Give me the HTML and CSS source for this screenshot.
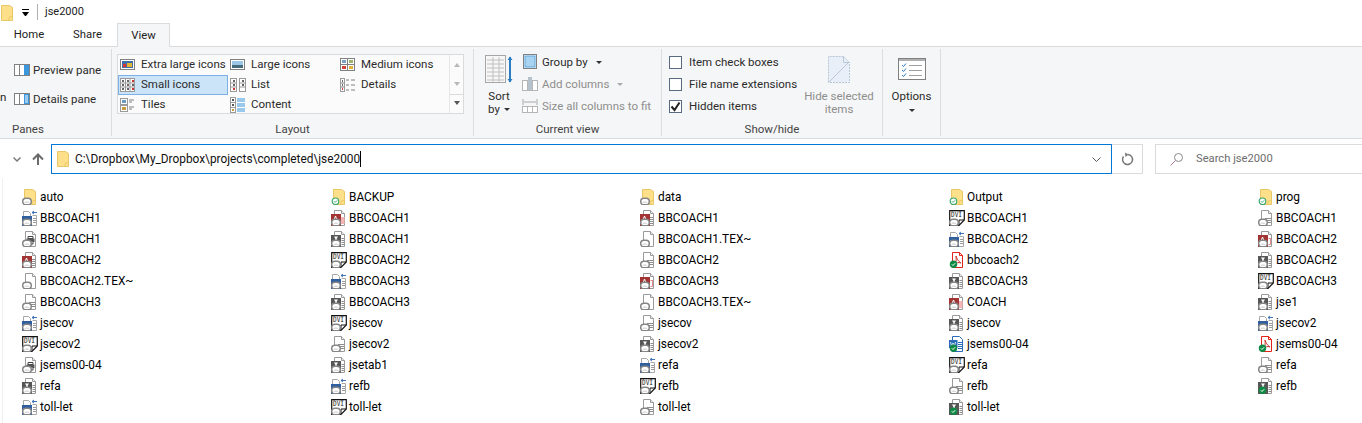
FILE: index.html
```html
<!DOCTYPE html>
<html lang="en">
<head>
<meta charset="utf-8">
<title>jse2000</title>
<link rel="stylesheet" href="styles.css">
</head>
<body>
<svg class="defs" width="0" height="0">
  <symbol id="folder" viewBox="0 0 16 16"><path d="M2.500 .5h8l3 2v13h-11z" fill="#ffe08a" stroke="#e8c766"/><path d="M10 15.500v-3l3.500-1.500" fill="none" stroke="#e8c766"/></symbol>
  <symbol id="off" viewBox="0 0 16 16"><rect x=".7" y="9.200" width="8.600" height="6.600" rx="3.300" fill="#fff" stroke="#858585" stroke-width="1.500"/><path d="M2.500 14c0-.8.500-1.200 1-1.200.3-.9 2.400-.9 2.700 0 .7 0 1.100.4 1.100 1.200z" fill="#dcdcdc"/></symbol>
  <symbol id="ok" viewBox="0 0 16 16"><circle cx="4.500" cy="12.300" r="3.300" fill="#fff" stroke="#3aa76d" stroke-width="1.200"/><path d="M3 12.300l1.100 1.100 2-2" fill="none" stroke="#3aa76d"/></symbol>
  <symbol id="sync" viewBox="0 0 16 16"><circle cx="4.500" cy="12.300" r="3.700" fill="#0f8a45"/><path d="M2.800 12.300l1.200 1.200 2.200-2.300" fill="none" stroke="#fff"/></symbol>
  <symbol id="page" viewBox="0 0 16 16"><path d="M3.500 .5h7l3 3v12h-10z" fill="#fff" stroke="#9a9a9a"/><path d="M10.500 .5v3h3" fill="#eee" stroke="#9a9a9a"/></symbol>
  <symbol id="lines" viewBox="0 0 16 16"><use href="#page"/><path d="M7 8.500h6M7 10.500h6M7 12.500h6" stroke="#8c8c8c"/></symbol>
  <symbol id="print" viewBox="0 0 16 16"><use href="#page"/><path d="M6 5.500h5v2h-5z" fill="#fff" stroke="#444"/><path d="M4.500 7.500h8v3.500h-8z" fill="#555"/><path d="M6 10h5v3h-5z" fill="#fff" stroke="#444"/></symbol>
  <symbol id="bib" viewBox="0 0 16 16"><path d="M1.500 1.500h5l2 2v3h-7z" fill="#fff" stroke="#a8a8a8"/><path d="M10 2.500h5M10 2.500l2-1.500M10 2.500l2 1.500" fill="none" stroke="#3f74b8"/><path d="M10.500 5.500h4v10h-5" fill="#fff" stroke="#a8a8a8"/><path d="M11 8.500h3M11 10.500h3M11 12.500h3" stroke="#9a9a9a"/><rect x="0" y="6" width="10" height="10" fill="#2f5f9f"/></symbol>
  <symbol id="red" viewBox="0 0 16 16"><use href="#page"/><path d="M10 7.500h3M10 9.500h3M10 11.500h3M10 13.500h3" stroke="#8c8c8c"/><rect x="0" y="4" width="10" height="12" fill="#a23434"/><path d="M3 10l1.500-4 1.500 4" fill="none" stroke="#fff"/></symbol>
  <symbol id="redlight" viewBox="0 0 16 16"><use href="#page"/><path d="M10.500 7.500h2.500M12.500 7.500v6h-2" fill="none" stroke="#e58a8a"/><rect x="0" y="4" width="10" height="12" fill="#a23434"/><path d="M3 10l1.500-4 1.500 4" fill="none" stroke="#fff"/></symbol>
  <symbol id="coach" viewBox="0 0 16 16"><use href="#page"/><rect x="10" y="7" width="3.500" height="7" fill="#f5b5b5"/><rect x="0" y="4" width="10" height="12" fill="#a23434"/><path d="M3 10l1.500-4 1.500 4" fill="none" stroke="#fff"/></symbol>
  <symbol id="dark" viewBox="0 0 16 16"><use href="#page"/><path d="M10.500 7.500h2.500M10.500 9.500h2.500M10.500 11.500h2.500M10.500 13.500h2.500" stroke="#8c8c8c"/><rect x="0" y="4" width="10" height="12" fill="#565656"/><path d="M3 5.500h4l-1.500 2.500 1.500 2.500h-4l1.500-2.500z" fill="#fff"/></symbol>
  <symbol id="dvi" viewBox="0 0 16 16"><path d="M.7.700h14.600v9.300l-5.300 5.300h-9.300z" fill="#fff" stroke="#111" stroke-width="1.200"/><path d="M15 10h-5v5" fill="none" stroke="#111"/></symbol>
  <symbol id="pdf" viewBox="0 0 16 16"><path d="M3.500 .5h7l3 3v12h-10z" fill="#fff" stroke="#e2231a"/><path d="M10.500 .5v3h3" fill="none" stroke="#e2231a"/><path d="M7 4c1 3 2 5 5 7-3-1-4-.5-6 2 1-3 1.500-5 1-9z" fill="none" stroke="#c9342c"/></symbol>
  <symbol id="word" viewBox="0 0 16 16"><path d="M3.500 .5h7l3 3v12h-10z" fill="#fff" stroke="#2b6cb8"/><path d="M9 6.500h4M9 8.500h4M9 10.500h4M9 12.500h4" stroke="#2b6cb8"/><rect x="0" y="4" width="8.500" height="8" fill="#2b6cb8"/><path d="M1.500 6l1 4 1.500-3 1.500 3 1-4" fill="none" stroke="#fff" stroke-width=".8"/></symbol>
</svg>

<header class="titlebar">
  <svg class="ico title-folder"><use href="#folder"/></svg>
  <span class="qat-caret"></span>
  <span class="title-sep"></span>
  <span>jse2000</span>
</header>

<nav class="tabs">
  <span class="tab">Home</span>
  <span class="tab tab-share">Share</span>
  <span class="tab tab-active">View</span>
</nav>

<section class="ribbon">
  <div class="group g-panes">
    <div class="group-body panes">
      <span class="clipped">n</span>
      <div class="pane-list">
        <div class="pane-btn"><svg class="ico" viewBox="0 0 16 16"><rect x=".5" y="2.500" width="15" height="11" fill="#fff" stroke="#808080"/><path d="M5.500 3v10" stroke="#808080"/><rect x="10" y="3" width="5" height="10" fill="#3a96dd"/></svg>Preview pane</div>
        <div class="pane-btn"><svg class="ico" viewBox="0 0 16 16"><rect x=".5" y="2.500" width="15" height="11" fill="#fff" stroke="#808080"/><path d="M5.500 3v10" stroke="#808080"/><rect x="10" y="3" width="5" height="10" fill="#3a96dd"/><path d="M11 5h3M11 7h3M11 9h3M11 11h3" stroke="#fff"/></svg>Details pane</div>
      </div>
    </div>
    <div class="group-label label-left">Panes</div>
  </div>

  <div class="group g-layout">
    <div class="group-body">
      <div class="gallery">
        <div class="gallery-grid">
          <div class="gal"><svg class="ico" viewBox="0 0 16 16"><rect x=".5" y="2.500" width="14" height="10" fill="#fff" stroke="#808080"/><rect x="2" y="4" width="11" height="7" fill="#3d6ea8"/><rect x="3" y="7" width="3" height="3" fill="#d33"/><rect x="7" y="6" width="5" height="4" fill="#e8b530"/></svg><span class="gal-text">Extra large icons</span></div>
          <div class="gal"><svg class="ico" viewBox="0 0 16 16"><rect x=".5" y="2.500" width="14" height="10" fill="#fff" stroke="#808080"/><rect x="2" y="4" width="11" height="4" fill="#9cc6e6"/><rect x="2" y="8" width="11" height="3" fill="#456a7a"/></svg><span class="gal-text">Large icons</span></div>
          <div class="gal"><svg class="ico" viewBox="0 0 16 16"><rect x=".5" y="1.500" width="14" height="12" fill="#fff" stroke="#808080"/><path d="M7.500 2v11M1 7.500h13" stroke="#808080"/><rect x="2" y="3" width="4" height="3" fill="#7aa2c8"/><rect x="9" y="3" width="4" height="3" fill="#9db56a"/><rect x="2" y="9" width="4" height="3" fill="#d0433a"/><rect x="9" y="9" width="4" height="3" fill="#e3b23c"/></svg><span class="gal-text">Medium icons</span></div>
          <div class="gal gal-on"><svg class="ico" viewBox="0 0 16 16"><rect x=".5" y="1.500" width="14" height="13" fill="#fff" stroke="#9a9a9a"/><path d="M5.500 2v12M10 2v12M1 6h13M1 10h13" stroke="#9a9a9a"/><path d="M2 3h2v2h-2zM7 3h2v2h-2zM2 7h2v2h-2zM7 7h2v2h-2zM12 7h2v2h-2zM2 11h2v2h-2zM7 11h2v2h-2z" fill="#666"/><path d="M12 3h2v2h-2zM12 11h2v2h-2z" fill="#c33"/></svg><span class="gal-text">Small icons</span></div>
          <div class="gal"><svg class="ico" viewBox="0 0 16 16"><rect x=".5" y="1.500" width="6" height="13" fill="#fff" stroke="#9a9a9a"/><rect x="9.500" y="1.500" width="6" height="13" fill="#fff" stroke="#9a9a9a"/><path d="M1 6h5M1 10h5M10 6h5M10 10h5" stroke="#9a9a9a"/><path d="M3 3h2v2h-2zM3 7h2v2h-2zM12 3h2v2h-2zM12 7h2v2h-2z" fill="#666"/><path d="M3 11h2v2h-2z" fill="#c33"/></svg><span class="gal-text">List</span></div>
          <div class="gal"><svg class="ico" viewBox="0 0 16 16"><rect x=".5" y="1.500" width="4" height="13" fill="#fff" stroke="#9a9a9a"/><path d="M1 6h3M1 10h3M6 3h3M11 3h4M6 8h3M11 8h4M6 13h3M11 13h4" stroke="#808080"/><path d="M2 3h1v2h-1zM2 7h1v2h-1z" fill="#666"/><path d="M2 11h1v2h-1z" fill="#c33"/></svg><span class="gal-text">Details</span></div>
          <div class="gal"><svg class="ico" viewBox="0 0 16 16"><rect x=".5" y="1.500" width="7" height="6" fill="#fff" stroke="#9a9a9a"/><rect x=".5" y="8.500" width="7" height="6" fill="#fff" stroke="#9a9a9a"/><rect x="2" y="3" width="4" height="3" fill="#6a9ac0"/><rect x="2" y="10" width="4" height="3" fill="#c99a3a"/><path d="M9 3h5M9 5h3M9 10h5M9 12h3" stroke="#808080"/></svg><span class="gal-text">Tiles</span></div>
          <div class="gal"><svg class="ico" viewBox="0 0 16 16"><rect x=".5" y=".5" width="5" height="15" fill="#fff" stroke="#9a9a9a"/><path d="M1 5.500h4M1 10.500h4" stroke="#9a9a9a"/><path d="M7 2h8M7 4h8M7 7h8M7 9h8M7 12h8M7 14h8" stroke="#3a96dd"/><path d="M2 2h2v2h-2zM2 7h2v2h-2z" fill="#555"/><path d="M2 12h2v2h-2z" fill="#c99a3a"/></svg><span class="gal-text">Content</span></div>
        </div>
        <div class="gallery-scroll">
          <span class="arrow-up"></span>
          <span class="arrow-down"></span>
          <span class="arrow-more"></span>
        </div>
      </div>
    </div>
    <div class="group-label">Layout</div>
  </div>

  <div class="group g-current">
    <div class="group-body current">
      <div class="big-btn sort-btn">
        <svg class="big-ico" width="28" height="30" viewBox="0 0 28 30"><rect x=".5" y=".5" width="20" height="27" fill="#f7f7f7" stroke="#a6a6a6"/><path d="M2 5h17M2 9h17M2 13h17M2 17h17M2 21h17M2 25h17M8 2v25M14 2v25" stroke="#c0c0c0"/><path d="M25 2v25" stroke="#2b7cc4" stroke-width="2"/><path d="M22.500 5l2.500-3.500 2.500 3.500zM22.500 24l2.500 3.500 2.500-3.500z" fill="#2b7cc4"/></svg>
        <span>Sort</span>
        <span>by<i class="caret"></i></span>
      </div>
      <div class="stack">
        <div class="cmd"><svg class="ico" viewBox="0 0 16 16"><rect x="1.500" y=".5" width="13" height="14" fill="none" stroke="#808080"/><rect x="3" y="2" width="10" height="11" fill="#a8d4f2" stroke="#5fa8de"/></svg>Group by<i class="caret"></i></div>
        <div class="cmd off"><svg class="ico" viewBox="0 0 16 16"><rect x=".5" y="4.500" width="15" height="10" fill="#fff" stroke="#b5b5b5"/><path d="M5.500 5v9M10.500 5v9" stroke="#b5b5b5"/><rect x="6" y="1" width="4" height="13" fill="#b5c2cc"/></svg>Add columns<i class="caret caret-off"></i></div>
        <div class="cmd off"><svg class="ico" viewBox="0 0 16 16"><path d="M1 1v6M15 1v6M2 4h12" stroke="#a8a8a8" fill="none"/><rect x=".5" y="8.500" width="15" height="6" fill="#fff" stroke="#b5b5b5"/><path d="M5.500 9v5M10.500 9v5" stroke="#b5b5b5"/></svg>Size all columns to fit</div>
      </div>
    </div>
    <div class="group-label">Current view</div>
  </div>

  <div class="group g-show">
    <div class="group-body show">
      <div class="checks">
        <label class="check"><span class="box"></span>Item check boxes</label>
        <label class="check"><span class="box"></span>File name extensions</label>
        <label class="check"><span class="box"><svg width="13" height="13" viewBox="0 0 13 13"><path d="M2.500 6.500l3 3.500 5-7.500" fill="none" stroke="#222" stroke-width="2"/></svg></span>Hidden items</label>
      </div>
      <div class="big-btn hide-btn">
        <svg class="big-ico" width="24" height="30" viewBox="0 0 24 30"><path d="M1.500 1.500h15l6 6v20h-21z" fill="#e9eff8"/><path d="M1.500 27.500v-26h15l6 6v20z" fill="none" stroke="#b9c6d6" stroke-dasharray="2 1"/><path d="M16.500 1.500v6h6M2 27l20-20" fill="none" stroke="#b9c6d6"/></svg>
        <span>Hide selected</span>
        <span>items</span>
      </div>
    </div>
    <div class="group-label">Show/hide</div>
  </div>

  <div class="group g-options">
    <div class="group-body">
      <div class="big-btn options-btn">
        <svg class="big-ico" width="28" height="30" viewBox="0 0 28 30"><rect x=".5" y="3.500" width="27" height="21" fill="#fff" stroke="#808080"/><rect x="1" y="4" width="26" height="2" fill="#b0b0b0"/><path d="M4 10l1.500 1.500 2.500-3M4 15l1.500 1.500 2.500-3M4 20l1.500 1.500 2.500-3" fill="none" stroke="#2b7cc4"/><path d="M11 10.500h13M11 15.500h13M11 20.500h13" stroke="#a0a0a0"/></svg>
        <span>Options</span>
        <i class="caret"></i>
      </div>
    </div>
  </div>
</section>

<section class="addressrow">
  <svg class="nav-chev" width="8" height="5" viewBox="0 0 8 5"><path d="M.5.500l3.500 3.500 3.500-3.500" fill="none" stroke="#7a7a7a" stroke-width="1.500"/></svg>
  <svg class="nav-up" width="12" height="12" viewBox="0 0 12 12"><path d="M6 12V1.500M1 6.500l5-5 5 5" fill="none" stroke="#6a6a6a" stroke-width="2"/></svg>
  <div class="address">
    <svg class="ico addr-folder"><use href="#folder"/></svg>
    <span class="addr-text">C:\Dropbox\My_Dropbox\projects\completed\jse2000</span>
    <svg class="addr-chev" width="9" height="5" viewBox="0 0 9 5"><path d="M.5.500l4 4 4-4" fill="none" stroke="#555"/></svg>
  </div>
  <div class="refresh"><svg width="14" height="14" viewBox="0 0 14 14"><path d="M8 2.500a5 5 0 1 1-4.500 2" fill="none" stroke="#777" stroke-width="1.500"/><path d="M5 .5l3.500 2-3 2.500z" fill="#777"/></svg></div>
  <div class="search"><svg width="14" height="14" viewBox="0 0 14 14"><circle cx="8.500" cy="5.500" r="4" fill="none" stroke="#8a8a8a"/><path d="M5.500 8.500l-5 5" stroke="#b07aa8"/></svg><span>Search jse2000</span></div>
</section>

<main class="files">
  <div class="file"><svg class="ico"><use href="#folder"/><use href="#off"/></svg>auto</div>
  <div class="file"><svg class="ico"><use href="#folder"/><use href="#ok"/></svg>BACKUP</div>
  <div class="file"><svg class="ico"><use href="#folder"/><use href="#off"/></svg>data</div>
  <div class="file"><svg class="ico"><use href="#folder"/><use href="#ok"/></svg>Output</div>
  <div class="file"><svg class="ico"><use href="#folder"/><use href="#ok"/></svg>prog</div>

  <div class="file"><svg class="ico"><use href="#bib"/><use href="#off"/></svg>BBCOACH1</div>
  <div class="file"><svg class="ico"><use href="#coach"/><use href="#off"/></svg>BBCOACH1</div>
  <div class="file"><svg class="ico"><use href="#red"/><use href="#off"/></svg>BBCOACH1</div>
  <div class="file"><svg class="ico"><use href="#dvi"/><text class="dvi-text" x="2" y="7" textLength="11" lengthAdjust="spacingAndGlyphs">DVI</text><use href="#off"/></svg>BBCOACH1</div>
  <div class="file"><svg class="ico"><use href="#lines"/><use href="#off"/></svg>BBCOACH1</div>

  <div class="file"><svg class="ico"><use href="#print"/><use href="#off"/></svg>BBCOACH1</div>
  <div class="file"><svg class="ico"><use href="#dark"/><use href="#off"/></svg>BBCOACH1</div>
  <div class="file"><svg class="ico"><use href="#page"/><use href="#off"/></svg>BBCOACH1.TEX~</div>
  <div class="file"><svg class="ico"><use href="#bib"/><use href="#off"/></svg>BBCOACH2</div>
  <div class="file"><svg class="ico"><use href="#redlight"/><use href="#off"/></svg>BBCOACH2</div>

  <div class="file"><svg class="ico"><use href="#red"/><use href="#off"/></svg>BBCOACH2</div>
  <div class="file"><svg class="ico"><use href="#dvi"/><text class="dvi-text" x="2" y="7" textLength="11" lengthAdjust="spacingAndGlyphs">DVI</text><use href="#off"/></svg>BBCOACH2</div>
  <div class="file"><svg class="ico"><use href="#lines"/><use href="#off"/></svg>BBCOACH2</div>
  <div class="file"><svg class="ico"><use href="#pdf"/><use href="#sync"/></svg>bbcoach2</div>
  <div class="file"><svg class="ico"><use href="#dark"/><use href="#off"/></svg>BBCOACH2</div>

  <div class="file"><svg class="ico"><use href="#page"/><use href="#off"/></svg>BBCOACH2.TEX~</div>
  <div class="file"><svg class="ico"><use href="#bib"/><use href="#off"/></svg>BBCOACH3</div>
  <div class="file"><svg class="ico"><use href="#redlight"/><use href="#off"/></svg>BBCOACH3</div>
  <div class="file"><svg class="ico"><use href="#dark"/><use href="#off"/></svg>BBCOACH3</div>
  <div class="file"><svg class="ico"><use href="#dvi"/><text class="dvi-text" x="2" y="7" textLength="11" lengthAdjust="spacingAndGlyphs">DVI</text><use href="#off"/></svg>BBCOACH3</div>

  <div class="file"><svg class="ico"><use href="#lines"/><use href="#off"/></svg>BBCOACH3</div>
  <div class="file"><svg class="ico"><use href="#dark"/><use href="#off"/></svg>BBCOACH3</div>
  <div class="file"><svg class="ico"><use href="#page"/><use href="#off"/></svg>BBCOACH3.TEX~</div>
  <div class="file"><svg class="ico"><use href="#coach"/><use href="#off"/></svg>COACH</div>
  <div class="file"><svg class="ico"><use href="#dark"/><use href="#off"/></svg>jse1</div>

  <div class="file"><svg class="ico"><use href="#bib"/><use href="#off"/></svg>jsecov</div>
  <div class="file"><svg class="ico"><use href="#dvi"/><text class="dvi-text" x="2" y="7" textLength="11" lengthAdjust="spacingAndGlyphs">DVI</text><use href="#off"/></svg>jsecov</div>
  <div class="file"><svg class="ico"><use href="#lines"/><use href="#off"/></svg>jsecov</div>
  <div class="file"><svg class="ico"><use href="#dark"/><use href="#off"/></svg>jsecov</div>
  <div class="file"><svg class="ico"><use href="#bib"/><use href="#off"/></svg>jsecov2</div>

  <div class="file"><svg class="ico"><use href="#dvi"/><text class="dvi-text" x="2" y="7" textLength="11" lengthAdjust="spacingAndGlyphs">DVI</text><use href="#off"/></svg>jsecov2</div>
  <div class="file"><svg class="ico"><use href="#lines"/><use href="#off"/></svg>jsecov2</div>
  <div class="file"><svg class="ico"><use href="#dark"/><use href="#off"/></svg>jsecov2</div>
  <div class="file"><svg class="ico"><use href="#word"/><use href="#sync"/></svg>jsems00-04</div>
  <div class="file"><svg class="ico"><use href="#pdf"/><use href="#sync"/></svg>jsems00-04</div>

  <div class="file"><svg class="ico"><use href="#print"/><use href="#off"/></svg>jsems00-04</div>
  <div class="file"><svg class="ico"><use href="#dark"/><use href="#off"/></svg>jsetab1</div>
  <div class="file"><svg class="ico"><use href="#bib"/><use href="#off"/></svg>refa</div>
  <div class="file"><svg class="ico"><use href="#dvi"/><text class="dvi-text" x="2" y="7" textLength="11" lengthAdjust="spacingAndGlyphs">DVI</text><use href="#off"/></svg>refa</div>
  <div class="file"><svg class="ico"><use href="#lines"/><use href="#off"/></svg>refa</div>

  <div class="file"><svg class="ico"><use href="#dark"/><use href="#off"/></svg>refa</div>
  <div class="file"><svg class="ico"><use href="#bib"/><use href="#off"/></svg>refb</div>
  <div class="file"><svg class="ico"><use href="#dvi"/><text class="dvi-text" x="2" y="7" textLength="11" lengthAdjust="spacingAndGlyphs">DVI</text><use href="#off"/></svg>refb</div>
  <div class="file"><svg class="ico"><use href="#lines"/><use href="#off"/></svg>refb</div>
  <div class="file"><svg class="ico"><use href="#dark"/><use href="#sync"/></svg>refb</div>

  <div class="file"><svg class="ico"><use href="#bib"/><use href="#off"/></svg>toll-let</div>
  <div class="file"><svg class="ico"><use href="#dvi"/><text class="dvi-text" x="2" y="7" textLength="11" lengthAdjust="spacingAndGlyphs">DVI</text><use href="#off"/></svg>toll-let</div>
  <div class="file"><svg class="ico"><use href="#lines"/><use href="#off"/></svg>toll-let</div>
  <div class="file"><svg class="ico"><use href="#dark"/><use href="#sync"/></svg>toll-let</div>
</main>
</body>
</html>
```
FILE: styles.css
```css
* { box-sizing: border-box; }
html, body { margin: 0; padding: 0; }
body {
  width: 1362px;
  height: 423px;
  overflow: hidden;
  background: #fff;
  color: #000;
  font: 12px/16px Roboto, "Noto Sans", sans-serif;
}
.defs { display: block; width: 0; height: 0; overflow: hidden; }
.dvi-text { font: 7.5px "DejaVu Sans Mono", monospace; fill: #111; }
.ico { width: 16px; height: 16px; flex: none; display: block; }

.titlebar { height: 23px; display: flex; align-items: center; color: #222; font-size: 11px; }
.title-folder { margin: 2px 0 0 -1px; }
.qat-caret { width: 7px; height: 6px; margin-left: 7px; border-top: 1px solid #000; }
.qat-caret::after { content: ""; display: block; margin-top: 2px; border: 3.5px solid transparent; border-top: 4px solid #000; border-bottom: 0; }
.title-sep { width: 1px; height: 16px; background: #b0b0b0; margin: 0 7px 0 8px; }

.tabs { height: 24px; display: flex; border-bottom: 1px solid #dadbdc; font-size: 11.3px; }
.tab { width: 58px; text-align: center; line-height: 23px; color: #222; }
.tab-share { width: 59px; }
.tab-active {
  width: 53px;
  height: 24px;
  background: #f5f6f7;
  border: 1px solid #dadbdc;
  border-bottom: 0;
}

.ribbon { height: 92px; display: flex; background: #f5f6f7; border-bottom: 1px solid #dadbdc; padding-top: 2px; color: #2b2b2b; font-size: 11.5px; }
.group { display: flex; flex-direction: column; border-right: 1px solid #dcddde; height: 87px; flex: none; }
.group-body { height: 72px; display: flex; flex: none; }
.group-label { text-align: center; color: #444; line-height: 16px; }
.label-left { text-align: left; padding-left: 12px; }
.g-panes { width: 112px; }
.g-layout { width: 362px; }
.g-current { width: 188px; }
.g-show { width: 221px; }
.g-options { width: 58px; }

.panes { align-items: flex-start; }
.clipped { width: 14px; margin-top: 40px; flex: none; color: #222; }
.pane-list { display: flex; flex-direction: column; gap: 13px; margin-top: 13px; }
.pane-btn { display: flex; align-items: center; gap: 3px; white-space: nowrap; height: 16px; }

.gallery { margin: 5px 0 0 5px; width: 347px; height: 60px; border: 1px solid #dadbdc; background: #fbfbfc; display: flex; }
.gallery-grid { width: 332px; display: grid; grid-template-columns: 110px 110px 110px; grid-auto-rows: 20px; align-content: start; }
.gal { display: flex; align-items: center; gap: 5px; padding-left: 2px; white-space: nowrap; height: 20px; }
.gal-text { margin-bottom: 2px; }
.gal-on { background: #cce4f7; box-shadow: inset 0 0 0 1px #7db0e6; }
.gallery-scroll { width: 14px; margin-left: auto; border-left: 1px solid #e6e6e6; display: flex; flex-direction: column; align-items: center; }
.arrow-up, .arrow-down, .arrow-more { height: 20px; display: block; width: 100%; }
.arrow-up::after, .arrow-down::after, .arrow-more::after { content: ""; display: block; width: 0; margin: 8px auto 0; border: 3px solid transparent; }
.arrow-up::after { border-top: 0; border-bottom: 4px solid #b8b8b8; }
.arrow-down::after { border-bottom: 0; border-top: 4px solid #b8b8b8; }
.arrow-more { border-top: 1px solid #dadbdc; }
.arrow-more::after { border-bottom: 0; border-top: 4px solid #555; margin-top: 6px; }

.current { padding-left: 11px; }
.big-btn { display: flex; flex-direction: column; align-items: center; line-height: 13px; flex: none; }
.big-ico { display: block; margin: 6px 0 5px; flex: none; }
.sort-btn { width: 28px; margin-right: 9px; }
.stack { display: flex; flex-direction: column; gap: 6px; margin-top: 5px; }
.cmd { display: flex; align-items: center; gap: 4px; height: 16px; white-space: nowrap; }
.off { color: #8e8e8e; }
.caret { display: inline-block; width: 0; margin-left: 4px; vertical-align: middle; border: 3px solid transparent; border-top: 3px solid #333; border-bottom: 0; }
.caret-off { border-top-color: #aaa; }

.show { padding-left: 7px; }
.checks { display: flex; flex-direction: column; gap: 6px; margin-top: 5px; width: 135px; flex: none; }
.check { display: flex; align-items: center; gap: 7px; height: 16px; white-space: nowrap; }
.box { width: 13px; height: 13px; background: #fff; border: 1px solid #5a6a80; flex: none; display: block; }
.box svg { display: block; margin: -1px; }
.hide-btn { width: 70px; color: #8e8e8e; white-space: nowrap; }
.options-btn { width: 57px; }
.options-btn .caret { margin: 6px 0 0 0; }

.addressrow { height: 39px; display: flex; align-items: center; padding-top: 1px; font-size: 11.85px; }
.nav-chev { margin-left: 13px; }
.nav-up { margin-left: 11px; }
.address { margin-left: 7px; width: 1061px; height: 30px; border: 1px solid #0078d7; display: flex; align-items: center; padding: 0 10px 0 3px; }
.addr-folder { margin-right: 4px; }
.addr-text { margin-right: auto; white-space: nowrap; color: #111; border-right: 1px solid #000; }
.refresh { width: 31px; height: 30px; border: 1px solid #dadbdc; border-left: 0; display: flex; align-items: center; justify-content: center; }
.search { margin-left: 12px; width: 207px; height: 30px; border: 1px solid #dadbdc; border-right: 0; display: flex; align-items: center; gap: 12px; padding-left: 14px; color: #6d6d6d; font-size: 11.2px; }

.files { display: grid; grid-template-columns: repeat(4, 309px) minmax(0, 1fr); grid-auto-rows: 21px; margin-left: 2px; border-left: 1px solid #f0f0f0; padding: 8px 0 0 19px; height: 245px; font-size: 11.85px; }
.file { display: flex; align-items: center; gap: 2px; height: 21px; white-space: nowrap; overflow: hidden; }
```
